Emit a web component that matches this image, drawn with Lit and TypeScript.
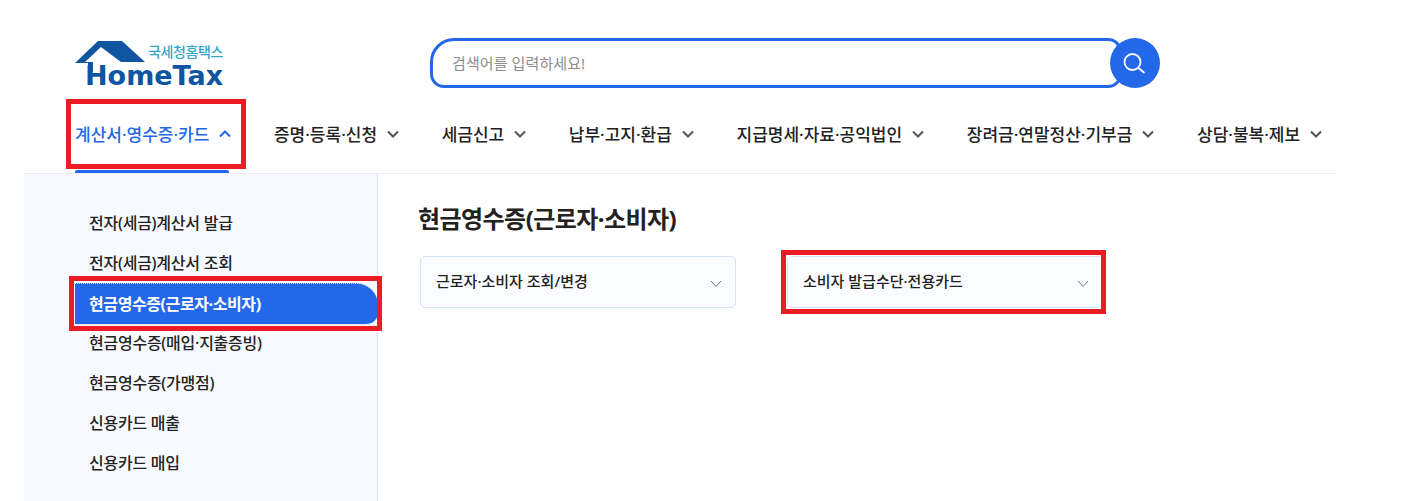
import { LitElement, html, css, svg } from "lit";
import { customElement } from "lit/decorators.js";

const NAV = [
  ["계산서·영수증·카드", true],
  ["증명·등록·신청", false],
  ["세금신고", false],
  ["납부·고지·환급", false],
  ["지급명세·자료·공익법인", false],
  ["장려금·연말정산·기부금", false],
  ["상담·불복·제보", false],
] as const;

const SIDE = [
  "전자(세금)계산서 발급",
  "전자(세금)계산서 조회",
  "현금영수증(근로자·소비자)",
  "현금영수증(매입·지출증빙)",
  "현금영수증(가맹점)",
  "신용카드 매출",
  "신용카드 매입",
];

@customElement("app-root")
export class AppRoot extends LitElement {
  static styles = css`
    :host {
      display: block;
      position: relative;
      width: 1405px;
      height: 501px;
      overflow: hidden;
      background: #fff;
      font-family: "Noto Sans", "Noto Sans CJK KR", sans-serif;
      color: #222;
    }
    .top {
      display: flex;
      align-items: flex-start;
      height: 100px;
      padding-left: 75px;
      box-sizing: border-box;
    }
    .logo {
      width: 150px;
      height: 50px;
      margin-top: 40px;
      position: relative;
      flex: none;
    }
    .logo svg { position: absolute; left: 0; top: 0; }
    .logo-ko {
      position: absolute;
      left: 73px;
      top: 3px;
      font-size: 14px;
      line-height: 18px;
      font-weight: 500;
      color: #35a5c5;
      white-space: nowrap;
      letter-spacing: -0.4px;
    }
    .logo-en {
      position: absolute;
      left: 10px;
      top: 20px;
      font-family: "DejaVu Sans", sans-serif;
      font-size: 27px;
      line-height: 32px;
      font-weight: 700;
      color: #0f559f;
      white-space: nowrap;
    }
    .search {
      margin: 38px 0 0 205px;
      display: flex;
      align-items: center;
    }
    .box {
      width: 692px;
      height: 50px;
      box-sizing: border-box;
      border: 3px solid #2368e8;
      border-radius: 24px 14px 14px 14px;
      padding: 0 0 2px 19px;
      display: flex;
      align-items: center;
      font-size: 15px;
      letter-spacing: 0.1px;
      color: #8c8c8c;
    }
    .btn {
      width: 50px;
      height: 50px;
      margin-left: -12px;
      border-radius: 50%;
      background: #2368e8;
      display: flex;
      align-items: center;
      justify-content: center;
      flex: none;
    }
    nav {
      display: flex;
      height: 73px;
      padding-left: 75px;
      align-items: center;
      box-sizing: border-box;
      gap: 42.6px;
      position: relative;
    }
    .nav-item {
      display: flex;
      align-items: center;
      gap: 10px;
      font-size: 17px;
      font-weight: 500;
      white-space: nowrap;
      color: #222;
      margin-top: -7px;
    }
    .nav-item svg { margin-top: 1px; }
    .nav-item.on { color: #2368e8; }
    .underline {
      position: absolute;
      left: 0;
      bottom: 0;
      width: 154px;
      height: 3px;
      margin-left: 75px;
      background: #2368e8;
      border-radius: 2px 2px 0 0;
    }
    .panel {
      margin-left: 24px;
      width: 1312px;
      display: flex;
      height: 328px;
      border-top: 1px solid #e9ecf3;
      box-sizing: border-box;
    }
    .side {
      width: 354px;
      flex: none;
      box-sizing: border-box;
      background: #f8f9fe;
      border-right: 1px solid #d9e2f3;
      padding: 28px 0 0 51px;
      display: flex;
      flex-direction: column;
    }
    .side-item {
      height: 40px;
      display: flex;
      align-items: center;
      padding: 0 0 0 14px;
      font-size: 16px;
      font-weight: 500;
      letter-spacing: -0.25px;
      color: #222;
      box-sizing: border-box;
      white-space: nowrap;
    }
    .side-item.on {
      width: 303px;
      height: 42px;
      margin: 1px -1px -3px 0;
      padding-bottom: 2px;
      background: #2368e8;
      color: #fff;
      border-radius: 0 22px 12px 0;
      font-weight: 700;
      letter-spacing: -0.4px;
      border-top: 1px dotted #cfd9f5;
      border-bottom: 1px solid #e4e7f0;
    }
    .main { padding: 28px 0 0 40px; flex: 1; }
    h2 {
      margin: 0;
      font-size: 24px;
      line-height: 34px;
      font-weight: 700;
      letter-spacing: -0.55px;
      color: #222;
    }
    .cards { display: flex; gap: 51px; margin-top: 20px; margin-left: 2px; }
    .card {
      width: 316px;
      height: 52px;
      box-sizing: border-box;
      background: #fbfcff;
      border: 1px solid #d5e2fb;
      border-radius: 5px;
      padding: 0 13px 3px 15px;
      display: flex;
      align-items: center;
      justify-content: space-between;
      font-size: 15px;
      font-weight: 500;
      color: #222;
    }
    .card svg { margin-top: 7px; }
    .mark {
      position: absolute;
      box-sizing: border-box;
      border: 5px solid #ed1c24;
      pointer-events: none;
    }
    .m1 { left: 66px; top: 99px; width: 180px; height: 70px; }
    .m2 { left: 69px; top: 276px; width: 313px; height: 55px; }
    .m3 { left: 781px; top: 250px; width: 325px; height: 64px; }
  `;

  private chev(up: boolean, color: string, w = 2) {
    return html`<svg width="12" height="8" viewBox="0 0 12 8" fill="none">
      ${svg`<path d=${up ? "M1 6.5 6 1.5l5 5" : "M1 1.5l5 5 5-5"} stroke=${color} stroke-width=${w} />`}
    </svg>`;
  }

  private cardChev() {
    return html`<svg width="12" height="8" viewBox="0 0 12 8" fill="none">
      <path d="M1 1l5 5.5L11 1" stroke="#777" stroke-width="1" />
    </svg>`;
  }

  render() {
    return html`
      <div class="top">
        <div class="logo">
          <svg width="72" height="34" viewBox="0 0 72 34">
            <path fill="#0f559f" d="M0 23 23 1h24l23 21H46L26 7 10 22h8v10h-5V23z" />
          </svg>
          <span class="logo-ko">국세청홈택스</span>
          <span class="logo-en">HomeTax</span>
        </div>
        <div class="search">
          <div class="box">검색어를 입력하세요!</div>
          <div class="btn">
            <svg width="24" height="24" viewBox="0 0 24 24" fill="none" stroke="#fff" stroke-width="1.8">
              <circle cx="9.5" cy="11" r="8" />
              <path d="M15.5 17l6 5" />
            </svg>
          </div>
        </div>
      </div>
      <nav>
        ${NAV.map(
          ([t, on]) => html`<div class="nav-item ${on ? "on" : ""}">
            <span>${t}</span>${this.chev(on, on ? "#2368e8" : "#555")}
          </div>`
        )}
        <div class="underline"></div>
      </nav>
      <div class="panel">
        <div class="side">
          ${SIDE.map((s, i) => html`<div class="side-item ${i === 2 ? "on" : ""}">${s}</div>`)}
        </div>
        <div class="main">
          <h2>현금영수증(근로자·소비자)</h2>
          <div class="cards">
            <div class="card"><span>근로자·소비자 조회/변경</span>${this.cardChev()}</div>
            <div class="card"><span>소비자 발급수단·전용카드</span>${this.cardChev()}</div>
          </div>
        </div>
      </div>
      <div class="mark m1"></div>
      <div class="mark m2"></div>
      <div class="mark m3"></div>
    `;
  }
}
